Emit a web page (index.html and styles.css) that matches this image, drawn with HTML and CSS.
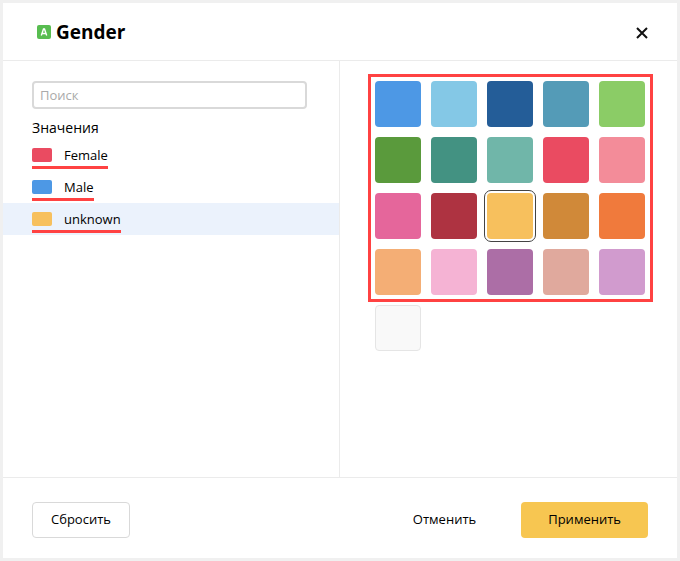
FILE: index.html
```html
<!DOCTYPE html>
<html lang="ru">
<head>
<meta charset="utf-8">
<title>Gender</title>
<link rel="stylesheet" href="styles.css">
</head>
<body>
<main class="dialog">
  <header class="header">
    <svg class="type-icon" viewBox="0 0 14 14" aria-hidden="true">
      <rect width="14" height="14" rx="2" fill="#58bd50"/>
      <path d="M4.300 10.400 6.500 4h1L9.700 10.400M5.100 8.500h3.800" fill="none" stroke="#fff" stroke-width="1.400"/>
    </svg>
    <h1 class="title">Gender</h1>
    <button class="close" type="button" aria-label="Закрыть">
      <svg viewBox="0 0 12 12" aria-hidden="true"><path d="M1 1l10 10M11 1L1 11" fill="none" stroke="#111" stroke-width="2"/></svg>
    </button>
  </header>
  <div class="body">
    <section class="values">
      <input class="search" type="search" placeholder="Поиск" aria-label="Поиск">
      <h2 class="values-title">Значения</h2>
      <ul class="list">
        <li class="item"><button class="value" type="button"><span class="chip red"></span>Female</button></li>
        <li class="item"><button class="value" type="button"><span class="chip blue"></span>Male</button></li>
        <li class="item selected"><button class="value" type="button"><span class="chip yellow"></span>unknown</button></li>
      </ul>
    </section>
    <section class="palette">
      <div class="colors framed">
        <input class="swatch blue" type="radio" name="color" aria-label="1">
        <input class="swatch sky" type="radio" name="color" aria-label="2">
        <input class="swatch navy" type="radio" name="color" aria-label="3">
        <input class="swatch steel" type="radio" name="color" aria-label="4">
        <input class="swatch lime" type="radio" name="color" aria-label="5">
        <input class="swatch green" type="radio" name="color" aria-label="6">
        <input class="swatch teal" type="radio" name="color" aria-label="7">
        <input class="swatch mint" type="radio" name="color" aria-label="8">
        <input class="swatch red" type="radio" name="color" aria-label="9">
        <input class="swatch salmon" type="radio" name="color" aria-label="10">
        <input class="swatch pink" type="radio" name="color" aria-label="11">
        <input class="swatch crimson" type="radio" name="color" aria-label="12">
        <input class="swatch yellow" type="radio" name="color" aria-label="13" checked>
        <input class="swatch ochre" type="radio" name="color" aria-label="14">
        <input class="swatch orange" type="radio" name="color" aria-label="15">
        <input class="swatch peach" type="radio" name="color" aria-label="16">
        <input class="swatch rose" type="radio" name="color" aria-label="17">
        <input class="swatch purple" type="radio" name="color" aria-label="18">
        <input class="swatch dusty" type="radio" name="color" aria-label="19">
        <input class="swatch lilac" type="radio" name="color" aria-label="20">
      </div>
      <div class="colors">
        <input class="swatch auto" type="radio" name="color" aria-label="21">
      </div>
    </section>
  </div>
  <footer class="footer">
    <button class="btn outlined" type="button">Сбросить</button>
    <button class="btn flat" type="button">Отменить</button>
    <button class="btn primary" type="button">Применить</button>
  </footer>
</main>
</body>
</html>
```
FILE: styles.css
```css
* {
  box-sizing: border-box;
}

body {
  margin: 0;
  min-height: 100vh;
  display: flex;
  padding: 3px;
  background: #f0f0f0;
  color: #000;
  font: 13px/20px "Open Sans", "Noto Sans", sans-serif;
}

button {
  font: inherit;
  color: inherit;
  cursor: pointer;
}

.dialog {
  flex: 1;
  display: flex;
  flex-direction: column;
  background: #fff;
}

.header {
  display: flex;
  align-items: center;
  padding: 17px 29px 16px 34px;
  border-bottom: 1px solid #ebebeb;
}

.type-icon {
  width: 14px;
  height: 14px;
  margin-right: 5px;
}

.title {
  flex: 1;
  margin: 0;
  font-size: 19px;
  line-height: 24px;
  font-weight: 700;
}

.close {
  display: flex;
  padding: 2px 0 0;
  border: 0;
  background: none;
}

.close svg {
  width: 12px;
  height: 12px;
}

.body {
  flex: 1;
  display: grid;
  grid-template-columns: 1fr 1fr;
}

.values {
  padding-top: 20px;
  border-right: 1px solid #ebebeb;
  display: flex;
  flex-direction: column;
}

.search {
  height: 28px;
  margin: 0 32px 9px 29px;
  padding: 0 6px;
  border: 2px solid #d9d9d9;
  border-radius: 4px;
  font: inherit;
  appearance: none;
}

.search::placeholder {
  color: #aaa;
}

.values-title {
  margin: 0 29px 1px;
  font-size: 14px;
  line-height: 20px;
  font-weight: 400;
}

.list {
  margin: 0;
  padding: 0;
  list-style: none;
}

.item {
  height: 32px;
  padding: 0 29px;
}

.selected {
  background: #ebf2fc;
}

.value {
  display: inline-flex;
  align-items: center;
  gap: 12px;
  height: 30px;
  padding: 5px 0 0;
  border: 0;
  border-bottom: 3px solid #ff4242;
  background: none;
}

.chip {
  width: 20px;
  height: 14px;
  border-radius: 2px;
}

.palette {
  padding: 20px 32px 0 35px;
}

.colors {
  display: grid;
  grid-template-columns: repeat(5, 46px);
  gap: 10px;
  width: max-content;
  margin-bottom: 10px;
}

.framed {
  position: relative;
}

.framed::after {
  content: "";
  position: absolute;
  inset: -7px -8px -7px -7px;
  border: 3px solid #ff4242;
  pointer-events: none;
}

.swatch {
  appearance: none;
  width: 46px;
  height: 46px;
  margin: 0;
  border-radius: 4px;
  cursor: pointer;
}

.swatch:checked {
  outline: 1px solid #444;
  outline-offset: 2px;
}

.blue { background: #4d98e5; }
.sky { background: #84c8e6; }
.navy { background: #245d98; }
.steel { background: #549bb7; }
.lime { background: #8bcc66; }
.green { background: #5a9a3c; }
.teal { background: #439282; }
.mint { background: #70b6a9; }
.red { background: #ea4b61; }
.salmon { background: #f38c99; }
.pink { background: #e5669b; }
.crimson { background: #ae3341; }
.yellow { background: #f7c05d; }
.ochre { background: #d08939; }
.orange { background: #f07a3c; }
.peach { background: #f4ae75; }
.rose { background: #f5b3d4; }
.purple { background: #ac6ea6; }
.dusty { background: #e0a99d; }
.lilac { background: #d19bce; }

.auto {
  border: 1px solid #e5e5e5;
  background: #f9f9f9;
}

.footer {
  display: flex;
  align-items: center;
  padding: 24px 29px 20px;
  border-top: 1px solid #ebebeb;
}

.btn {
  height: 36px;
  padding: 0 18px 2px;
  border: 1px solid transparent;
  border-radius: 4px;
  background: none;
}

.outlined {
  margin-right: auto;
  border-color: #d9d9d9;
}

.flat {
  margin-right: 26px;
}

.primary {
  padding: 0 26px 2px;
  background: #f7c651;
}
```
